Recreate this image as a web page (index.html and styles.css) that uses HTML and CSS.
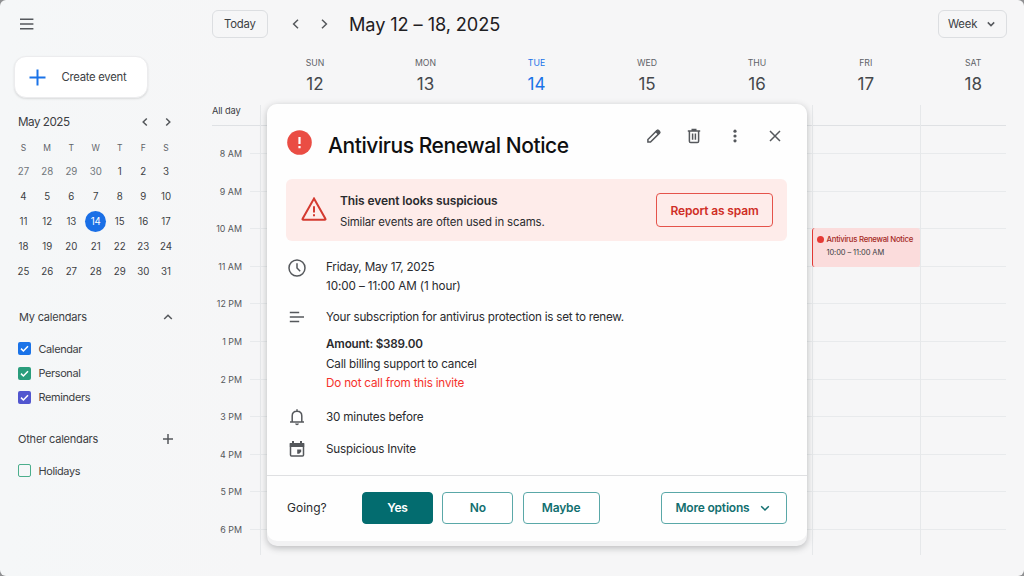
FILE: index.html
```html
<!DOCTYPE html>
<html lang="en">
<head>
  <meta charset="UTF-8" />
  <meta name="viewport" content="width=device-width, initial-scale=1.0"/>
  <title>Calendar</title>
  <link rel="stylesheet" href="styles.css">
</head>
<body>
  <div class="app">
    <aside class="sidebar">
      <svg class="menu-icon" viewBox="0 0 14 12"><path d="M0 1.2h13.4M0 6h13.4M0 10.8h13.4"/></svg>
      <button class="create-btn">
        <svg class="create-plus" viewBox="0 0 17 17"><path d="M8.5 .5v16M.5 8.5h16"/></svg>
        Create event
      </button>

      <!-- Mini month -->
      <div class="mini-header">
        <span>May 2025</span>
        <div class="mini-nav">
          <svg class="icon" viewBox="0 0 10 10"><path d="M6.8 1.5 3.2 5l3.6 3.5"/></svg>
          <svg class="icon" viewBox="0 0 10 10"><path d="M3.2 1.5 6.8 5 3.2 8.5"/></svg>
        </div>
      </div>
      <div class="mini-days">
        <span>S</span><span>M</span><span>T</span><span>W</span><span>T</span><span>F</span><span>S</span>
      </div>
      <div class="mini-grid">
        <span class="out">27</span><span class="out">28</span><span class="out">29</span><span class="out">30</span><span>1</span><span>2</span><span>3</span>
        <span>4</span><span>5</span><span>6</span><span>7</span><span>8</span><span>9</span><span>10</span>
        <span>11</span><span>12</span><span>13</span><span class="today">14</span><span>15</span><span>16</span><span>17</span>
        <span>18</span><span>19</span><span>20</span><span>21</span><span>22</span><span>23</span><span>24</span>
        <span>25</span><span>26</span><span>27</span><span>28</span><span>29</span><span>30</span><span>31</span>
      </div>

      <!-- Calendar lists -->
      <div class="list-header my">
        <span>My calendars</span>
        <svg class="icon" viewBox="0 0 10 10"><path d="M1.2 7 5 3.2 8.8 7"/></svg>
      </div>
      <div class="list">
        <div class="list-item"><span class="check blue"><svg viewBox="0 0 13 13"><path d="M3 6.6 5.4 9 10 4.2"/></svg></span>Calendar</div>
        <div class="list-item"><span class="check green"><svg viewBox="0 0 13 13"><path d="M3 6.6 5.4 9 10 4.2"/></svg></span>Personal</div>
        <div class="list-item"><span class="check purple"><svg viewBox="0 0 13 13"><path d="M3 6.6 5.4 9 10 4.2"/></svg></span>Reminders</div>
      </div>
      <div class="list-header other">
        <span>Other calendars</span>
        <svg class="icon" viewBox="0 0 10 10"><path d="M5 0v10M0 5h10"/></svg>
      </div>
      <div class="list-item"><span class="check empty"></span>Holidays</div>
    </aside>

    <main class="main">
      <div class="toolbar">
        <button class="btn-today">Today</button>
        <div class="week-nav">
          <svg class="icon" viewBox="0 0 12 12"><path d="M8 1.8 3.6 6 8 10.2"/></svg>
          <svg class="icon" viewBox="0 0 12 12"><path d="M4 1.8 8.4 6 4 10.2"/></svg>
        </div>
        <h1>May 12 – 18, 2025</h1>
        <button class="btn-view">Week
          <svg class="icon" viewBox="0 0 10 10"><path d="M1.8 3.4 5 6.6 8.2 3.4"/></svg>
        </button>
      </div>

      <div class="day-heads">
        <div class="day-head"><span>SUN</span><b>12</b></div>
        <div class="day-head"><span>MON</span><b>13</b></div>
        <div class="day-head active"><span>TUE</span><b>14</b></div>
        <div class="day-head"><span>WED</span><b>15</b></div>
        <div class="day-head"><span>THU</span><b>16</b></div>
        <div class="day-head"><span>FRI</span><b>17</b></div>
        <div class="day-head"><span>SAT</span><b>18</b></div>
      </div>

      <div class="week">
        <div class="hours">
          <div class="all-day">All day</div>
          <div class="hour"><span>8 AM</span></div>
          <div class="hour"><span>9 AM</span></div>
          <div class="hour"><span>10 AM</span></div>
          <div class="hour"><span>11 AM</span></div>
          <div class="hour"><span>12 PM</span></div>
          <div class="hour"><span>1 PM</span></div>
          <div class="hour"><span>2 PM</span></div>
          <div class="hour"><span>3 PM</span></div>
          <div class="hour"><span>4 PM</span></div>
          <div class="hour"><span>5 PM</span></div>
          <div class="hour"><span>6 PM</span></div>
        </div>
        <div class="columns">
          <div class="column line"></div>
          <div class="column"></div>
          <div class="column"></div>
          <div class="column"></div>
          <div class="column"></div>
          <div class="column line">
            <div class="event">
              <div class="event-title">Antivirus Renewal Notice</div>
              <div class="event-time">10:00 – 11:00 AM</div>
            </div>
          </div>
          <div class="column line"></div>
        </div>
      </div>
    </main>

    <!-- Event details popup -->
    <div class="popup">
      <div class="popup-inner">
        <div class="popup-header">
          <svg class="alert-dot" viewBox="0 0 25 25"><circle cx="12.5" cy="12.5" r="12.3"/><path d="M12.5 7v7M12.5 16v2.2"/></svg>
          <h2>Antivirus Renewal Notice</h2>
          <div class="popup-actions">
            <svg viewBox="0 0 16 16"><path d="M1.9 14.1V11.5L10.9 2.5q.7-.7 1.4 0l1.2 1.2q.7.7 0 1.4L4.5 14.1Z"/><path class="solid" d="m9.2 3.9 1.8-1.8q1-1 2 0l.9.9q1 1 0 2l-1.8 1.8Z"/></svg>
            <svg viewBox="0 0 16 16"><path d="M3.4 3.2v10q0 1.3 1.3 1.3h6.6q1.3 0 1.3-1.3v-10M1.8 2.9h12.4M5.5 1.6h5M6.6 5.6v6.2M9.4 5.6v6.2"/></svg>
            <svg viewBox="0 0 16 16"><g class="solid"><circle cx="8" cy="3.2" r="1.6"/><circle cx="8" cy="8" r="1.6"/><circle cx="8" cy="12.8" r="1.6"/></g></svg>
            <svg viewBox="0 0 16 16"><path d="m3 3 10 10M13 3 3 13"/></svg>
          </div>
        </div>

        <div class="warning">
          <svg class="warning-icon" viewBox="0 0 26 24"><path d="M13 1.6 24.4 21.8q.4.9-.6.9H2.2q-1 0-.6-.9Z"/><path d="M13 9.2v6.2M13 17.2v2.1"/></svg>
          <div class="warning-text">
            <strong>This event looks suspicious</strong>
            <span>Similar events are often used in scams.</span>
          </div>
          <button class="btn-spam">Report as spam</button>
        </div>

        <div class="details">
          <div class="detail when">
            <svg viewBox="0 0 18 18"><circle cx="9" cy="9" r="8"/><path d="M9 4.2V9l3.2 3.2"/></svg>
            <div>
              <p>Friday, May 17, 2025</p>
              <p class="hours-text">10:00 – 11:00 AM (1 hour)</p>
            </div>
          </div>
          <div class="detail about">
            <svg viewBox="0 0 18 18"><path d="M1.8 4.4h9.4M1.8 9H16M1.8 13.6h9.4"/></svg>
            <div>
              <p class="intro">Your subscription for antivirus protection is set to renew.</p>
              <p><strong>Amount: $389.00</strong></p>
              <p>Call billing support to cancel</p>
              <p class="danger">Do not call from this invite</p>
            </div>
          </div>
          <div class="detail reminder">
            <svg viewBox="0 0 18 18"><path d="M4.2 13.6V8q0-4.8 4.8-4.8T13.8 8v5.6M2 13.9h14M9 1.2v2"/><path class="solid" d="M7 15.6h4q-.4 1.6-2 1.6t-2-1.6Z"/></svg>
            <p>30 minutes before</p>
          </div>
          <div class="detail">
            <svg viewBox="0 0 18 18"><path d="M2.5 4.2h13v10.9q0 1-1 1h-11q-1 0-1-1Z"/><path class="solid" d="M1.8 3h14.4v4H1.8ZM4 1h2v3H4ZM12 1h2v3h-2ZM9.2 9.6h4v2.2l-2 2h-2Z"/></svg>
            <p>Suspicious Invite</p>
          </div>
        </div>

        <div class="popup-footer">
          <span class="going">Going?</span>
          <button class="rsvp yes">Yes</button>
          <button class="rsvp">No</button>
          <button class="rsvp maybe">Maybe</button>
          <button class="rsvp more">More options
            <svg viewBox="0 0 10 10"><path d="M1.2 3.2 5 7l3.8-3.8"/></svg>
          </button>
        </div>
      </div>
    </div>
  </div>
</body>
</html>
```
FILE: styles.css
```css
* {
  box-sizing: border-box;
}

body {
  margin: 0;
  background: #8f9092;
  font-family: Inter, "Open Sans", sans-serif;
  font-size: 11px;
  color: #3c4043;
  overflow: hidden;
}

h1, h2, p {
  margin: 0;
}

button {
  font-family: inherit;
  color: inherit;
  padding: 0;
}

svg {
  display: block;
  fill: none;
  stroke: #55585c;
  stroke-width: 1.5;
  flex-shrink: 0;
}

.solid {
  fill: #55585c;
  stroke: none;
}

.icon {
  width: 10px;
  height: 10px;
}

.app {
  position: relative;
  display: flex;
  width: 1024px;
  height: 576px;
  background: linear-gradient(90deg, #f5f7f8, #f6f6f7 25%);
  border-radius: 6px;
  overflow: hidden;
}

/* Sidebar */
.sidebar {
  width: 212px;
  padding: 18px 38px 0 18px;
  flex-shrink: 0;
}

.menu-icon {
  width: 14px;
  height: 12px;
  margin-left: 1.5px;
}

.create-btn {
  display: flex;
  align-items: center;
  width: 134px;
  height: 42px;
  margin: 26px 0 0 -4px;
  padding-left: 14px;
  gap: 15.5px;
  background: #fff;
  border: 1px solid #ececee;
  border-radius: 12px;
  box-shadow: 0 1px 2px rgba(60, 64, 67, .15);
  font-size: 11.3px;
  letter-spacing: -.28px;
}

.create-plus {
  width: 17px;
  height: 17px;
  stroke: #1a73e8;
  stroke-width: 2;
}

.mini-header {
  display: flex;
  justify-content: space-between;
  align-items: center;
  height: 20px;
  margin-top: 14px;
  font-size: 11.7px;
  letter-spacing: -.5px;
}

.mini-nav {
  display: flex;
  gap: 13px;
  margin-right: 1px;
}

.mini-days,
.mini-grid {
  display: grid;
  grid-template-columns: 23.6px 23.8px 24.5px 24.4px 23.6px 23.4px 22px;
  margin-left: -6.3px;
  text-align: center;
}

.mini-days {
  margin-top: 6px;
  height: 20px;
  line-height: 20px;
  font-size: 8.5px;
  color: #5f6368;
}

.mini-grid {
  margin-top: 1px;
  grid-auto-rows: 24.9px;
  align-items: center;
  justify-items: center;
  font-size: 9.7px;
}

.mini-grid .out {
  color: #70757a;
}

.mini-grid .today {
  width: 21px;
  height: 21px;
  line-height: 21px;
  border-radius: 50%;
  background: #1a6fe6;
  color: #fff;
}

.list-header {
  display: flex;
  align-items: center;
  justify-content: space-between;
  height: 20px;
  margin-right: 1px;
  font-size: 11px;
  letter-spacing: -.2px;
}

.list-header.my {
  margin-top: 24px;
  padding-left: 1px;
}

.list {
  margin-top: 9px;
}

.list-item {
  display: flex;
  align-items: center;
  height: 24.4px;
  gap: 7.5px;
  font-size: 10.9px;
  letter-spacing: -.35px;
}

.list-header.other {
  margin: 19px 1px 10px 0;
}

.check {
  width: 13px;
  height: 13px;
  border-radius: 2px;
}

.check svg {
  stroke: #fff;
}

.check.blue { background: #1a73e8; }
.check.green { background: #2a9d7c; }
.check.purple { background: #5156cf; }
.check.empty { border: 1.5px solid #4bae8c; }

/* Toolbar */
.main {
  display: flex;
  flex-direction: column;
  width: 812px;
  flex-shrink: 0;
}

.toolbar {
  display: flex;
  align-items: center;
  padding: 9px 17px 0 0;
  height: 38px;
}

.btn-today,
.btn-view {
  height: 28px;
  border: 1px solid #dcdee1;
  border-radius: 6px;
  background: transparent;
  font-size: 11.3px;
  letter-spacing: -.2px;
}

.btn-today {
  width: 55.5px;
}

.btn-view {
  display: flex;
  align-items: center;
  justify-content: space-between;
  width: 69px;
  margin-left: auto;
  padding: 0 10px 0 9px;
}

.week-nav {
  display: flex;
  gap: 16px;
  margin-left: 22px;
}

.week-nav .icon {
  width: 12px;
  height: 12px;
}

.toolbar h1 {
  margin-left: 19.5px;
  font-size: 18.2px;
  font-weight: 400;
  letter-spacing: -.1px;
  color: #1f2023;
}

/* Week */
.day-heads,
.columns {
  display: grid;
  grid-template-columns: 110px 111px 111px 110px 110px 107.5px 107.5px;
  margin-left: 48px;
}

.day-head {
  display: flex;
  flex-direction: column;
  align-items: center;
  padding-top: 17px;
  height: 67px;
  color: #5f6368;
}

.day-head span {
  font-size: 8.7px;
  line-height: 16px;
}

.day-head b {
  margin-top: 1px;
  font-size: 17px;
  font-weight: 400;
  line-height: 24px;
  color: #45484c;
}

.day-head.active span,
.day-head.active b {
  color: #1a73e8;
}

.week {
  display: grid;
  grid-template-columns: 812px;
}

.hours,
.columns {
  grid-area: 1 / 1;
}

.hours {
  padding-right: 18px;
}

.all-day {
  height: 21px;
  margin-bottom: 9px;
  border-bottom: 1px solid #dfe1e4;
  font-size: 9.3px;
  letter-spacing: -.15px;
  line-height: 12px;
}

.hour {
  display: flex;
  align-items: center;
  height: 37.55px;
  gap: 8px;
  font-size: 8.9px;
  color: #55585c;
}

.hour span {
  width: 30px;
  text-align: right;
}

.hour::after {
  content: "";
  flex: 1;
  height: 1px;
  background: #e8eaec;
}

.columns {
  height: 450px;
}

.column.line {
  border-left: 1px solid #e6e8ea;
}

.event {
  height: 39px;
  margin: 123px 0 0 -1px;
  padding: 5px 0 0 13.5px;
  background: #fbdcdc;
  border-left: 1.5px solid #e53935;
  border-radius: 3px;
  font-size: 7.8px;
  line-height: 13px;
  white-space: nowrap;
}

.event-title {
  display: flex;
  align-items: center;
  color: #a52a25;
  font-weight: 500;
  letter-spacing: -.28px;
}

.event-title::before {
  content: "";
  width: 7px;
  height: 7px;
  flex-shrink: 0;
  margin: 0 3px 0 -10px;
  border-radius: 50%;
  background: #e53935;
}

.event-time {
  font-size: 7.5px;
  letter-spacing: -.1px;
}

/* Popup */
.popup {
  position: absolute;
  left: 267px;
  top: 104px;
  width: 540px;
  height: 442px;
  padding-bottom: 5px;
  background: #f2f2f3;
  border-radius: 10px;
  box-shadow: 0 2px 7px rgba(60, 64, 67, .33);
  color: #2a2b2e;
}

.popup-inner {
  height: 100%;
  background: #fefefe;
  border-radius: 10px;
}

.popup-header {
  display: flex;
  align-items: center;
  height: 75px;
  padding: 3px 24px 0 20px;
}

.alert-dot {
  width: 25px;
  height: 25px;
  margin-top: -1px;
  fill: #ea4d44;
  stroke: none;
}

.alert-dot path {
  stroke: #fff;
  stroke-width: 2.2;
}

.popup-header h2 {
  margin: 4px 0 0 16px;
  font-size: 21px;
  font-weight: 500;
  letter-spacing: -.43px;
  white-space: nowrap;
  color: #0f0f10;
}

.popup-actions {
  display: flex;
  gap: 24.3px;
  margin: -14px 0 0 auto;
}

.popup-actions svg {
  width: 16px;
  height: 16px;
}

.warning {
  display: flex;
  align-items: center;
  height: 62px;
  margin: 0 20px 0 19px;
  padding: 0 14px 0 15px;
  background: #feecea;
  border-radius: 6px;
}

.warning-icon {
  width: 26px;
  height: 24px;
  margin-top: -2px;
  stroke: #d43a30;
  stroke-width: 2;
}

.warning-text {
  display: flex;
  flex-direction: column;
  margin: 3px 0 0 13px;
  font-size: 11.4px;
  letter-spacing: -.14px;
  line-height: 21.5px;
}

.warning-text strong {
  font-size: 12px;
  font-weight: 600;
  letter-spacing: -.1px;
}

.btn-spam {
  width: 117px;
  height: 34px;
  margin-left: auto;
  border: 1px solid #e5534b;
  border-radius: 4px;
  background: transparent;
  font-size: 12px;
  font-weight: 600;
  letter-spacing: -.15px;
  color: #cf2e26;
}

.details {
  height: 234px;
  padding: 17px 20px 0 21px;
  font-size: 11.7px;
  letter-spacing: -.2px;
  line-height: 19.3px;
}

.detail {
  display: flex;
  gap: 20px;
}

.detail svg {
  width: 18px;
  height: 18px;
  margin-top: 1px;
}

.detail strong {
  font-weight: 600;
}

.detail .hours-text {
  letter-spacing: -.1px;
}

.detail .intro {
  letter-spacing: -.23px;
  margin-bottom: 8.5px;
}

.detail .danger {
  color: #f5322c;
}

.about {
  margin-top: 11px;
}

.about svg {
  margin-top: 0;
}

.reminder {
  margin: 15px 0 12.5px;
}

.reminder svg,
.reminder + .detail svg {
  margin-top: 0;
}

.popup-footer {
  display: flex;
  align-items: center;
  height: 66px;
  padding: 0 20px 2px;
  border-top: 1px solid #dfe0e2;
}

.going {
  width: 75px;
  font-size: 12px;
}

.rsvp {
  width: 71px;
  height: 32px;
  margin-right: 9.3px;
  border: 1px solid #5aa8a8;
  border-radius: 4px;
  background: #fff;
  font-size: 12px;
  font-weight: 600;
  letter-spacing: -.2px;
  color: #126f70;
}

.rsvp.yes {
  background: #036c6f;
  border-color: #036c6f;
  color: #fff;
}

.rsvp.maybe {
  width: 77px;
}

.rsvp.more {
  display: flex;
  align-items: center;
  justify-content: center;
  gap: 10px;
  width: 126px;
  padding-right: 3px;
  margin: 0 0 0 auto;
}

.rsvp.more svg {
  width: 10px;
  height: 10px;
  stroke: #126f70;
}
```
